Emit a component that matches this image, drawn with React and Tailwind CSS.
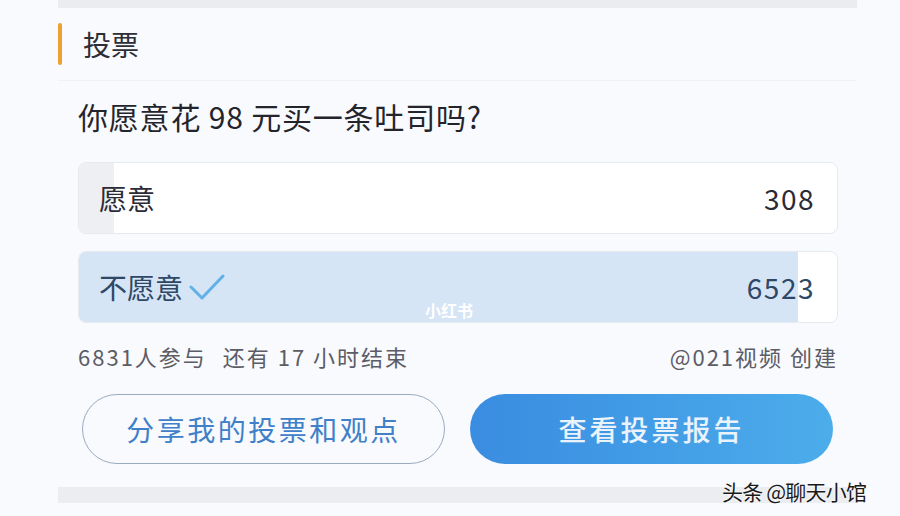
import React from "react";

const options = [
  { label: "愿意", count: 308, pct: 4.6, fill: "bg-[#eeeff2]", text: "text-[#2b2b35]", voted: false },
  { label: "不愿意", count: 6523, pct: 94.9, fill: "bg-[#d5e5f6]", text: "text-[#2e4866]", voted: true },
];

function Check() {
  return (
    <svg width="36" height="30" viewBox="0 0 36 30" fill="none">
      <path d="M2 15 L13 26 L34 4" stroke="#62b0e8" strokeWidth="3" strokeLinecap="round" strokeLinejoin="round" />
    </svg>
  );
}

export default function App() {
  return (
    <div
      className="relative w-[900px] h-[516px] overflow-hidden bg-[#f8fafd]"
      style={{ fontFamily: '"Noto Sans CJK SC", "Noto Sans", sans-serif' }}
    >
      <div className="ml-[58px] w-[799px] flex flex-col">
        {/* top strip */}
        <div className="h-[8px] bg-[#ebecef]" />

        {/* header */}
        <div className="h-[73px] flex items-center border-b border-[#eef1f5]">
          <div className="w-[4px] h-[42px] rounded-full bg-[#f0a030]" />
          <div className="ml-[21px] text-[28px] leading-none text-[#2e2e36]">投票</div>
        </div>

        <div className="pl-[20px] pr-[19px]">
          {/* question */}
          <div className="mt-[15px] h-[40px] flex items-center text-[30px] leading-none text-[#24242c] tracking-[0.8px]">
            你愿意花 98 元买一条吐司吗?
          </div>

          {/* options */}
          <div className="mt-[26px] flex flex-col gap-[17px]">
            {options.map((opt, i) => (
              <div
                key={i}
                className="relative h-[72px] rounded-[8px] border border-[#e6eaef] bg-white overflow-hidden"
              >
                <div
                  className={`absolute left-0 top-0 bottom-0 ${opt.fill}`}
                  style={{ width: `${opt.pct}%` }}
                />
                <div className="relative h-full flex items-center justify-between pl-[20px] pr-[22px]">
                  <div className={`flex items-center gap-[6px] text-[28px] leading-none ${opt.text}`}>
                    <span>{opt.label}</span>
                    {opt.voted && <Check />}
                  </div>
                  <div className={`text-[28px] leading-none tracking-[1.5px] ${opt.text}`}>{opt.count}</div>
                </div>
                {opt.voted && (
                  <div className="absolute left-[346px] top-[48px] text-[16px] font-bold leading-[20px] text-white">
                    小红书
                  </div>
                )}
              </div>
            ))}
          </div>

          {/* stats */}
          <div className="mt-[22px] flex items-center justify-between text-[22px] leading-none text-[#5c5c66] tracking-[2px]">
            <div>
              6831人参与<span className="ml-[16px]">还有 17 小时结束</span>
            </div>
            <div>@021视频 创建</div>
          </div>

          {/* buttons */}
          <div className="mt-[27px] px-[4px] flex gap-[25px]">
            <div className="w-[363px] h-[70px] rounded-full border border-[#9aabc0] flex items-center justify-center text-[28px] text-[#3f80c9] tracking-[2.5px]">
              分享我的投票和观点
            </div>
            <div className="w-[363px] h-[70px] rounded-full bg-gradient-to-r from-[#3a8ce0] to-[#4cadeb] flex items-center justify-center text-[28px] font-medium text-[#eaf3fc] tracking-[3px]">
              查看投票报告
            </div>
          </div>
        </div>

        {/* bottom strip */}
        <div className="mt-[23px] h-[16px] bg-[#ebedf0]" />
      </div>

      {/* watermark */}
      <div
        className="absolute left-[722px] top-[481px] text-[21px] leading-none text-[#1a1a1a] tracking-[-0.8px]"
        style={{ textShadow: "0 0 2px #fff, 0 0 2px #fff" }}
      >
        头条 @聊天小馆
      </div>
    </div>
  );
}
